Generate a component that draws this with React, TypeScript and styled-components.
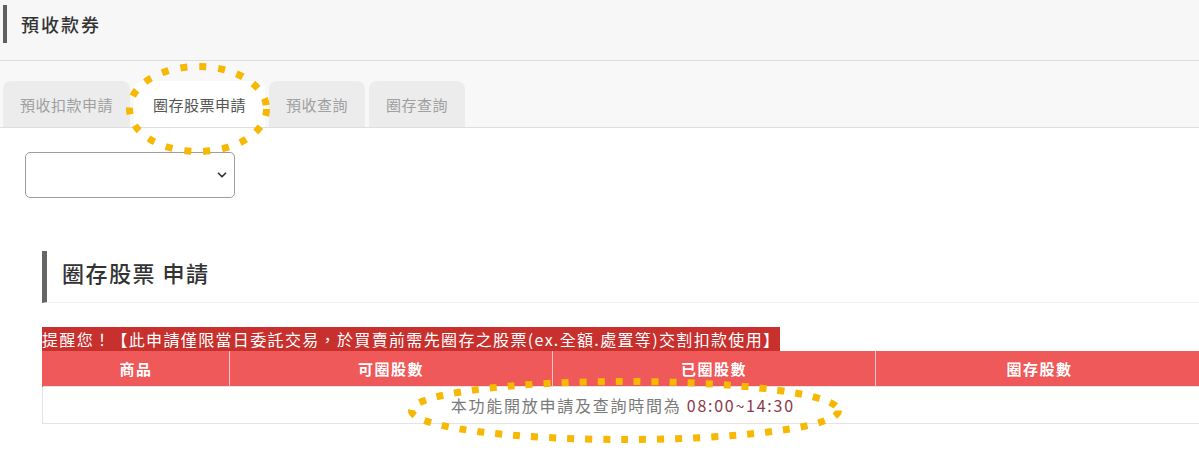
import styled, { createGlobalStyle } from 'styled-components'
import { ChevronDown } from 'lucide-react'

const GlobalStyle = createGlobalStyle`
    html, body {
        margin: 0;
        padding: 0;
        background: #fff;
    }
    body {
        font-family: "Noto Sans CJK TC", "Noto Sans", sans-serif;
        overflow: hidden;
    }
`

const Page = styled.div`
    position: relative;
    width: 1199px;
    min-height: 451px;
    overflow: hidden;
`

const Header = styled.header`
    height: 61px;
    background: #f7f7f7;
    border-bottom: 1px solid #dcdcdc;
    padding-top: 5px;
    box-sizing: border-box;
`

const PageTitle = styled.h1`
    margin: 0 0 0 3px;
    height: 38px;
    line-height: 38px;
    border-left: 4px solid #5f5f5f;
    padding-left: 14px;
    font-size: 18px;
    font-weight: 500;
    letter-spacing: 2px;
    color: #333;
`

const TabBar = styled.nav`
    height: 67px;
    background: #f8f8f8;
    border-bottom: 1px solid #dedede;
    box-sizing: border-box;
    display: flex;
    align-items: flex-end;
    gap: 4px;
    padding-left: 3px;
`

const Tab = styled.div<{ $active?: boolean }>`
    height: 46px;
    display: flex;
    align-items: center;
    padding: 0 ${({ $active }) => ($active ? '19px' : '17px')};
    border-radius: 8px 8px 0 0;
    background: ${({ $active }) => ($active ? '#fff' : '#ececec')};
    color: ${({ $active }) => ($active ? '#555' : '#a0a0a0')};
    font-size: 15px;
    letter-spacing: 0.5px;
`

const Content = styled.main`
    padding: 24px 0 0 25px;
`

const SelectBox = styled.div`
    width: 210px;
    height: 46px;
    box-sizing: border-box;
    border: 1px solid #9d9d9d;
    border-radius: 5px;
    display: flex;
    align-items: center;
    justify-content: flex-end;
    padding-right: 5px;
    color: #333;
`

const Section = styled.section`
    margin: 53px 0 0 17px;
`

const SectionTitle = styled.h2`
    margin: 0;
    height: 52px;
    box-sizing: border-box;
    border-left: 5px solid #666;
    border-bottom: 1px solid #f0f0f0;
    padding: 5px 0 15px 15px;
    line-height: 32px;
    font-size: 22px;
    font-weight: 500;
    letter-spacing: 1.5px;
    color: #333;
`

const Notice = styled.div`
    display: inline-block;
    margin-top: 24px;
    height: 24px;
    line-height: 24px;
    background: #c8302e;
    color: #fff;
    font-size: 16px;
    letter-spacing: 1.35px;
    white-space: nowrap;
`

const Table = styled.table`
    width: 1157px;
    border-collapse: collapse;
    table-layout: fixed;
`

const Th = styled.th<{ $width: number }>`
    width: ${({ $width }) => $width}px;
    height: 35px;
    padding: 0;
    background: #ef5959;
    color: #fff;
    font-size: 15px;
    font-weight: 700;
    letter-spacing: 1.5px;
    border-left: 1px solid #f7c4c4;
    &:first-child {
        border-left: 1px solid #ef5959;
    }
`

const Td = styled.td`
    height: 36px;
    padding: 0;
    text-align: center;
    border: 1px solid #e4e4e4;
    font-size: 16px;
    letter-spacing: 1.75px;
    color: #7a7a7a;
`

const Time = styled.span`
    color: #8b3a4a;
`

const Marks = styled.svg`
    position: absolute;
    left: 0;
    top: 0;
    pointer-events: none;
`

const columns = [
    { label: '商品', width: 186 },
    { label: '可圈股數', width: 322 },
    { label: '已圈股數', width: 322 },
    { label: '圈存股數', width: 327 },
]

const tabs = ['預收扣款申請', '圈存股票申請', '預收查詢', '圈存查詢']

const App = () => {
    return (
        <>
            <GlobalStyle />
            <Page>
                <Header>
                    <PageTitle>預收款券</PageTitle>
                </Header>
                <TabBar>
                    {tabs.map((t, i) => (
                        <Tab key={t} $active={i === 1}>{t}</Tab>
                    ))}
                </TabBar>
                <Content>
                    <SelectBox>
                        <ChevronDown size={14} strokeWidth={3} />
                    </SelectBox>
                    <Section>
                        <SectionTitle>圈存股票 申請</SectionTitle>
                        <Notice>提醒您！【此申請僅限當日委託交易，於買賣前需先圈存之股票(ex.全額.處置等)交割扣款使用】</Notice>
                        <Table>
                            <thead>
                                <tr>
                                    {columns.map((c) => (
                                        <Th key={c.label} $width={c.width}>{c.label}</Th>
                                    ))}
                                </tr>
                            </thead>
                            <tbody>
                                <tr>
                                    <Td colSpan={4}>本功能開放申請及查詢時間為 <Time>08:00~14:30</Time></Td>
                                </tr>
                            </tbody>
                        </Table>
                    </Section>
                </Content>
                <Marks width="1199" height="451">
                    <ellipse cx="198" cy="109" rx="68.5" ry="42.5" fill="none" stroke="#f6b800" strokeWidth="7" strokeDasharray="7 12" />
                    <ellipse cx="625" cy="410.5" rx="213.5" ry="29" fill="none" stroke="#f6b800" strokeWidth="7" strokeDasharray="7 11" />
                </Marks>
            </Page>
        </>
    )
}

export default App
